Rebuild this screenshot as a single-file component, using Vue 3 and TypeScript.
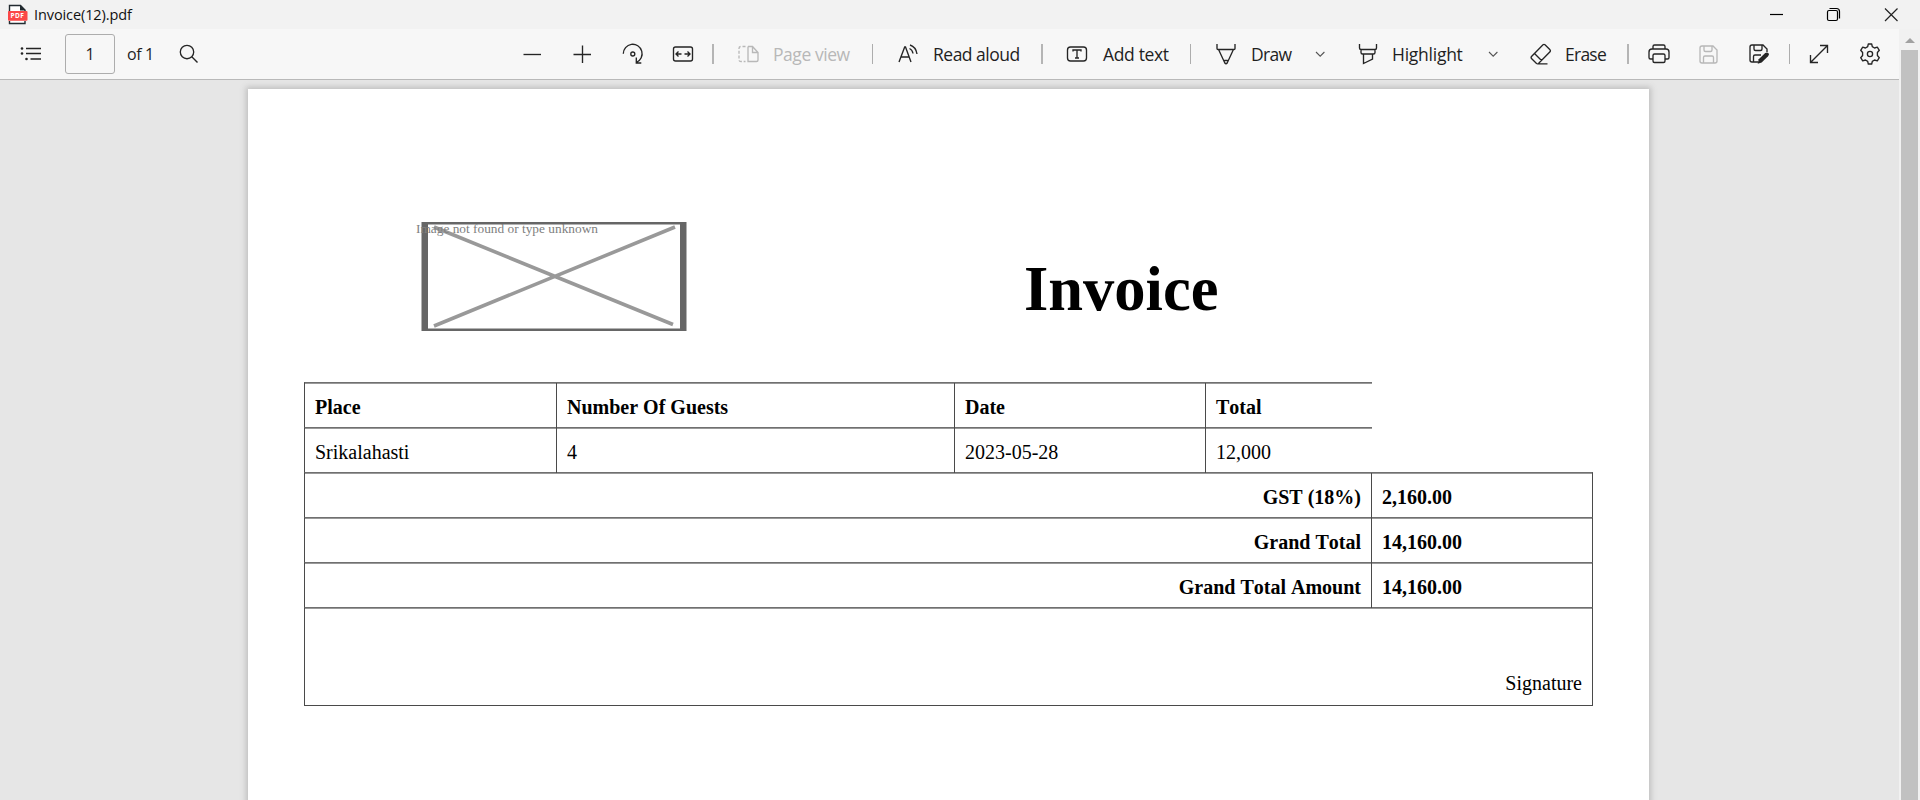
<script setup lang="ts">
interface Column { label: string; value: string }
const columns: Column[] = [
  { label: 'Place', value: 'Srikalahasti' },
  { label: 'Number Of Guests', value: '4' },
  { label: 'Date', value: '2023-05-28' },
  { label: 'Total', value: '12,000' },
]
const totals: Column[] = [
  { label: 'GST (18%)', value: '2,160.00' },
  { label: 'Grand Total', value: '14,160.00' },
  { label: 'Grand Total Amount', value: '14,160.00' },
]
</script>

<template>
  <div class="window">
    <header class="titlebar">
      <svg class="pdf-icon" width="20" height="21" viewBox="0 0 20 21">
        <path d="M1.500 8V1.500h11L17 6v2M1.500 17v2.500H17v-2.500" fill="#fff" stroke="#222b30" stroke-width="1.400" />
        <path d="M12 1l5.500 5.500H12z" fill="#222b30" />
        <rect x="0" y="7" width="19.500" height="9.700" rx="1" fill="#fb4747" />
        <text x="9.400" y="14.200" text-anchor="middle" class="pdf-label">PDF</text>
      </svg>
      <span class="file-name">Invoice(12).pdf</span>
      <svg class="window-buttons" width="150" height="28" viewBox="1770 0 150 28">
        <path d="M1770 14.500h13" />
        <rect x="1827.500" y="10.500" width="10" height="10" rx="1.500" />
        <path d="M1829.500 8.500h7a3 3 0 0 1 3 3v7" />
        <path d="M1885 8.500l12.500 12.500M1897.500 8.500L1885 21" class="close" />
      </svg>
    </header>

    <div class="toolbar">
      <svg class="icon contents" width="22" height="16" viewBox="0 0 22 16">
        <path d="M6 2.500h15M6 7.500h15M10.500 13h10.500" />
        <g class="dots"><circle cx="2" cy="2.500" r="1.300" /><circle cx="2" cy="7.500" r="1.300" /><circle cx="6.500" cy="13" r="1.300" /></g>
      </svg>
      <div class="page-number">1</div>
      <span class="label of">of 1</span>
      <svg class="icon search" width="20" height="20" viewBox="0 0 20 20"><circle cx="8" cy="8" r="6.700" /><path d="M12.800 12.800l5.700 5.700" /></svg>

      <svg class="icon minus" width="20" height="20" viewBox="0 0 20 20"><path d="M1.500 10.500h17.500" /></svg>
      <svg class="icon plus" width="20" height="20" viewBox="0 0 20 20"><path d="M1.500 10.500h17.500M10.500 1.500v17.500" /></svg>
      <svg class="icon rotate" width="22" height="22" viewBox="0 0 22 22"><path d="M1.300 10.800a9.400 9.400 0 1 1 13.200 8.500M14.300 14.500v5.500h5" /><circle cx="10.800" cy="11" r="2" /></svg>
      <svg class="icon fit" width="22" height="18" viewBox="0 0 22 18"><rect x="1.500" y="2" width="19" height="14" rx="2" /><path d="M9.500 9H4M6.500 6.500L4 9l2.500 2.500M12.500 9H18M15.500 6.500L18 9l-2.500 2.500" /></svg>
      <i class="divider d1" />
      <svg class="icon page-view disabled" width="22" height="18" viewBox="0 0 22 18"><path d="M10 1.500v15h8.500q1.500 0 1.500-1.500V7.500L14.500 1.500H10M14.500 1.500v6H20" /><path d="M7.500 1.500H3Q1 1.500 1 3.500V15q0 1.500 2 1.500h4.500" stroke-dasharray="3 1.800" /></svg>
      <span class="label t-page">Page view</span>
      <i class="divider d2" />
      <svg class="icon read" width="21" height="20" viewBox="0 0 21 20"><path d="M1 18L6.700 3h.8L13 18M3 13h8M11.500 4.500q3 1.500 3.500 5M12 1q6 2 7 9" /></svg>
      <span class="label t-read">Read aloud</span>
      <i class="divider d3" />
      <svg class="icon add" width="22" height="18" viewBox="0 0 22 18"><rect x="1.500" y="2" width="19" height="14" rx="3" /><path d="M7 6.500V5h8v1.500M11 5v8M9 13h4" /></svg>
      <span class="label t-add">Add text</span>
      <i class="divider d4" />
      <svg class="icon draw" width="20" height="22" viewBox="0 0 20 22"><path d="M1 1v4.500q0 1 1 1h16q1 0 1-1V1M2.800 7l6 13q1.200 1.500 2.400 0l6-13M8.300 17.500h3.400" /></svg>
      <span class="label t-draw">Draw</span>
      <svg class="chevron c1" width="11" height="8" viewBox="0 0 11 8"><path d="M1 2l4.200 4.200L9.400 2" /></svg>
      <svg class="icon highlight" width="20" height="22" viewBox="0 0 20 22"><path d="M1.500 1v4q0 1.500 1.500 1.500h14q1.500 0 1.500-1.500V1M3 7v2.500q0 1.500 1.500 1.500h11q1.500 0 1.500-1.500V7M5.500 11v9.500L14.500 16v-5" /></svg>
      <span class="label t-highlight">Highlight</span>
      <svg class="chevron c2" width="11" height="8" viewBox="0 0 11 8"><path d="M1 2l4.200 4.200L9.400 2" /></svg>
      <svg class="icon erase" width="22" height="22" viewBox="0 0 22 22"><path d="M1.500 13.500L13 1.800q1-.8 2 0l5 5q.8 1 0 2L8.500 20.500q-1 .7-2 0l-5-5q-.8-1 0-2M4.500 10.500l7 7M7.500 20.800h10" /></svg>
      <span class="label t-erase">Erase</span>
      <i class="divider d5" />
      <svg class="icon print" width="22" height="20" viewBox="0 0 22 20"><path d="M5 5V2.500Q5 1 6.500 1h9Q17 1 17 2.500V5M5 15H2.500Q1 15 1 13.500V8q0-3 3-3h14q3 0 3 3v5.500q0 1.500-1.500 1.500H17" /><rect x="5" y="10" width="12" height="8.500" rx="1.500" /></svg>
      <svg class="icon save disabled" width="19" height="19" viewBox="0 0 19 19"><path d="M1 3q0-2 2-2h11l4 4v11q0 2-2 2H3q-2 0-2-2zM5 1v4q0 1.500 1.500 1.500h5Q13 6.500 13 5V1M4.500 18v-5.500Q4.500 11 6 11h7q1.500 0 1.500 1.500V18" /></svg>
      <svg class="icon save-as" width="20" height="20" viewBox="0 0 20 20"><path d="M9 18H3q-2 0-2-2V3q0-2 2-2h11l4 4v3M5 1v4q0 1.500 1.500 1.500h5Q13 6.500 13 5V1M4.500 18v-5.500Q4.500 11 6 11h6" /><path class="pencil" d="M8.700 19.700l1-4.400 6.500-6.300q2-1.300 3.300.2.900 1.500-.5 3l-6.300 6.300z" /></svg>
      <i class="divider d6" />
      <svg class="icon expand" width="20" height="20" viewBox="0 0 20 20"><path d="M1.500 18.500l17-17M11 1.500h7.500V9M1.500 11v7.500H9" /></svg>
      <svg class="icon gear" width="22" height="22" viewBox="0 0 22 22"><path d="M8.700 3.700L9.300 1h3.400l.6 2.700 2.200 1.300 2.800-.9 2 3.200L18.400 9.500v3l1.900 2.200-2 3.200-2.800-.9-2.200 1.300-.6 2.700H9.300l-.6-2.700L6.500 17l-2.800.9-2-3.200 1.900-2.200v-3L1.700 7.300l2-3.200 2.800.9z" stroke-linejoin="round" /><circle cx="11" cy="11" r="2.600" /></svg>
    </div>

    <div class="viewer">
      <main class="page">
        <div class="heading">
          <div class="missing">
            <svg width="266" height="110" viewBox="0 0 266 110">
              <rect x="0.500" y="0" width="265" height="109" fill="#666" />
              <rect x="7" y="2.500" width="252" height="104" fill="#fff" />
              <path d="M13 5L252 102.500M13 104L254 5" class="cross" />
            </svg>
            <span class="missing-text">Image not found or type unknown</span>
          </div>
          <h1>Invoice</h1>
        </div>
        <section class="invoice">
          <div class="row items head"><div v-for="c in columns" :key="c.label" class="cell">{{ c.label }}</div></div>
          <div class="row items"><div v-for="c in columns" :key="c.label" class="cell">{{ c.value }}</div></div>
          <div v-for="t in totals" :key="t.label" class="row total">
            <div class="cell right">{{ t.label }}</div><div class="cell">{{ t.value }}</div>
          </div>
          <div class="row signature"><span>Signature</span></div>
        </section>
      </main>
    </div>

    <aside class="scrollbar"><i class="arrow" /><div class="thumb" /></aside>
  </div>
</template>

<style>
html, body { margin: 0; overflow: hidden; }
</style>
<style scoped>
.window { width: 1920px; height: 800px; display: grid; grid-template: 29px 51px 720px / 1899px 21px; overflow: hidden; background: #e6e6e6; font-family: "Open Sans", "Noto Sans", sans-serif; color: #1f1f1f; }
.titlebar { grid-column: 1 / 3; display: flex; background: #f2f2f2; }
.pdf-icon { margin: 4px 0 0 8px; }
.pdf-label { font: bold 6.500px "Open Sans", sans-serif; fill: #fff; letter-spacing: .4px; }
.file-name { margin-left: 6px; font-size: 14.500px; line-height: 29px; letter-spacing: -.1px; color: #111; width: 120px; white-space: nowrap; }
.window-buttons { margin-left: auto; fill: none; stroke: #000; stroke-width: 1.200; }
.close { stroke: #222; }

.toolbar { box-sizing: border-box; height: 51px; border-bottom: 1px solid #b9b9b9; background: #f7f7f7; display: flex; align-items: center; }
.toolbar > * { flex: none; }
.icon { fill: none; stroke: #252525; stroke-width: 1.350; }
.disabled { stroke: #b8b8b8; }
.dots, .pencil { fill: #252525; stroke: none; }
.chevron { fill: none; stroke: #555; stroke-width: 1.100; }
.page-number { box-sizing: border-box; width: 50px; height: 40px; border: 1px solid #adadad; border-radius: 3px; font-size: 16px; line-height: 39px; text-align: center; }
.label { font-size: 17.500px; line-height: 30px; white-space: nowrap; }
.divider { width: 1px; height: 20px; background: #adadad; }
.d1, .d3, .d5 { width: 2px; background: #b5b5b5; }
.contents { margin-left: 20px; }
.page-number { margin-left: 23px; }
.of { margin-left: 12px; width: 26px; font-size: 16px; letter-spacing: -.4px; }
.search { margin-left: 26px; }
.minus { margin-left: 323px; }
.plus { margin-left: 30px; }
.rotate { margin-left: 30px; }
.fit { margin-left: 28px; }
.d1 { margin-left: 18px; }
.page-view { margin-left: 24px; }
.t-page { margin-left: 13px; width: 78px; letter-spacing: -.45px; color: #b8b8b8; }
.d2 { margin-left: 21px; }
.read { margin-left: 25px; }
.t-read { margin-left: 14px; width: 87px; letter-spacing: -.5px; }
.d3 { margin-left: 21px; }
.add { margin-left: 23px; }
.t-add { margin-left: 15px; width: 66px; letter-spacing: -.35px; }
.d4 { margin-left: 21px; }
.draw { margin-left: 25px; }
.t-draw { margin-left: 15px; width: 39px; letter-spacing: -.65px; }
.c1 { margin-left: 25px; }
.highlight { margin-left: 32px; }
.t-highlight { margin-left: 14px; width: 72px; letter-spacing: -.25px; }
.c2 { margin-left: 24px; }
.erase { margin-left: 31px; }
.t-erase { margin-left: 13px; width: 41px; letter-spacing: -.75px; }
.d5 { margin-left: 21px; }
.print { margin-left: 19px; }
.save { margin-left: 29px; }
.save-as { margin-left: 31px; }
.d6 { margin-left: 20px; }
.expand { margin-left: 19px; }
.gear { margin-left: 30px; }

.viewer { overflow: hidden; padding: 9px 0 0 248px; }
.page { box-sizing: border-box; width: 1401px; height: 760px; padding: 133px 56px 0; background: #fff; box-shadow: 0 0 6px 2px #bdbdbd; font-family: "Liberation Serif", serif; color: #000; }
.heading { display: flex; height: 161px; }
.missing { position: relative; width: 266px; margin-left: 117px; }
.missing svg { display: block; }
.cross { fill: none; stroke: #999; stroke-width: 3.600; }
.missing-text { position: absolute; left: -5px; top: 0; font-size: 13.350px; line-height: 14px; color: #808080; white-space: nowrap; }
h1 { margin: 29px 0 0 337px; font-size: 62.500px; line-height: 76px; font-weight: bold; }
.invoice { width: 1289px; font-size: 20px; margin-top: -1px; font-kerning: none; }
.row { box-sizing: border-box; height: 45px; display: grid; grid-template-rows: 44px; border: solid #4a4a4a; border-width: 1px 0 0 1px; border-top-color: #707070; box-shadow: inset 0 1px #999; }
.items { width: 1068px; grid-template-columns: 251px 398px 251px 167px; }
.cell { box-sizing: border-box; height: 45px; padding: 0 10px; line-height: 48px; white-space: nowrap; }
.cell + .cell { border-left: 1px solid #4a4a4a; }
.items .cell:nth-child(4) { padding-left: 10px; }
.head { font-weight: bold; }
.total { grid-template-columns: 1066px 1fr; border-right-width: 1px; font-weight: bold; }
.right { text-align: right; }
.signature { height: 99px; grid-template-rows: auto; border-width: 1px; text-align: right; padding: 52px 10px 0; line-height: 47px; }
.scrollbar { grid-column: 2; grid-row: 2 / 4; background: #f1f1f1; display: flex; flex-direction: column; align-items: center; }
.arrow { border: 5px solid transparent; border-top: 0; border-bottom: 5px solid #a1a1a1; margin: 9px 0 7px; }
.thumb { width: 17px; flex: 1; background: #c1c1c1; }
</style>
